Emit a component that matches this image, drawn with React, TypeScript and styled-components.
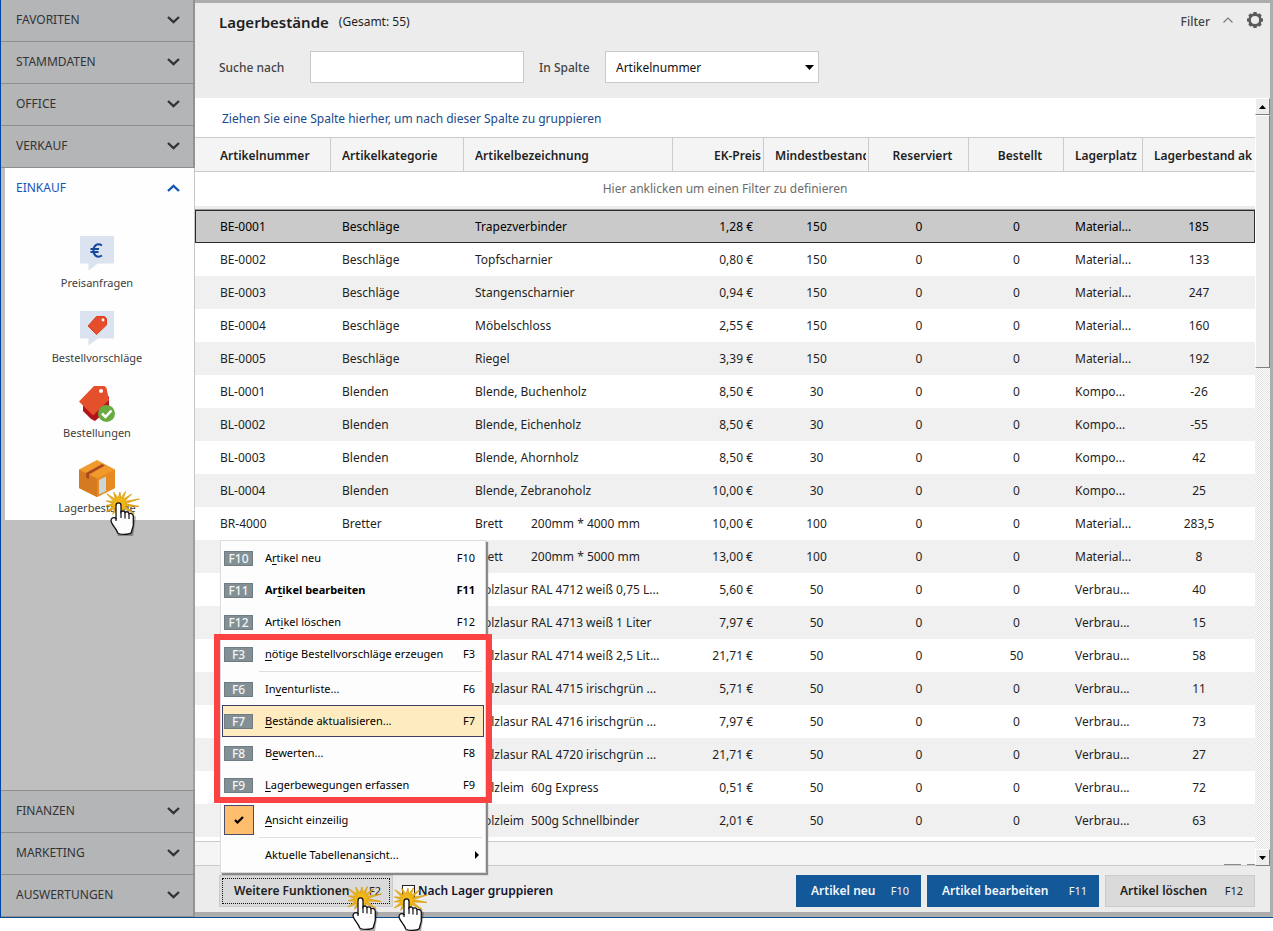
import React from 'react';
import styled, { createGlobalStyle, css } from 'styled-components';

const GlobalStyle = createGlobalStyle`
  *, *::before, *::after { box-sizing: border-box; }
  body { margin: 0; min-height: 100vh; background: #fff; color: #1f1f1f; font: 400 12px/16px "Noto Sans", "Open Sans", sans-serif; }
  button, input, select { font: inherit; color: inherit; margin: 0; }
`;

/* ---------- frame ---------- */

const AppFrame = styled.div`
  display: flex;
  border-left: 1px solid #0046a0;
  border-bottom: 1px solid #0c4a94;
  background: #adadad;
`;

const Sidebar = styled.nav`
  flex: none;
  width: 194px;
  display: flex;
  flex-direction: column;
  background: #bfbfbf;
`;

const SectionButton = styled.button`
  height: 42px;
  display: flex;
  align-items: center;
  justify-content: space-between;
  padding: 0 13px 2px 15px;
  border: 0;
  border-bottom: 1px solid #8e8e8e;
  border-right: 2px solid #939393;
  background: #b3b5b7;
  color: #333;
  text-align: left;
`;

const LowerSections = styled.div`
  display: flex;
  flex-direction: column;
  border-top: 1px solid #8e8e8e;
`;

const SidebarSpace = styled.div`
  flex: 1;
  border-right: 2px solid #a0a0a0;
`;

const OpenSection = styled.section`
  margin-left: 4px;
  background: #fefefe;
  border-right: 1px solid #c6c6c6;
`;

const OpenSectionButton = styled.button`
  width: 100%;
  height: 40px;
  display: flex;
  align-items: center;
  justify-content: space-between;
  padding: 0 14px 0 11px;
  border: 0;
  background: none;
  color: #1555b8;
`;

const NavList = styled.ul`
  list-style: none;
  margin: 0;
  padding: 27px 5px 0 0;
`;

const NavItem = styled.li`
  height: 75px;
  &:last-child { height: 60px; }
`;

const NavLink = styled.a`
  display: flex;
  flex-direction: column;
  align-items: center;
  color: #404040;
  font-size: 11px;
  text-decoration: none;
  svg { display: block; margin-bottom: 3px; }
`;

const NavLabel = styled.span`
  position: relative;
`;

const Main = styled.main`
  flex: 1;
  min-width: 0;
  border: solid #adadad;
  border-width: 3px 3px 5px 0;
  background: #ececec;
`;

/* ---------- top area ---------- */

const TitleBar = styled.header`
  height: 38px;
  display: flex;
  align-items: center;
  padding: 0 7px 0 24px;
`;

const Title = styled.h1`
  margin: 0 10px 0 0;
  font-size: 15px;
  font-weight: 600;
`;

const FilterToggle = styled.button`
  margin-left: auto;
  display: flex;
  align-items: center;
  gap: 13px;
  padding: 0 14px 0 0;
  border: 0;
  background: none;
  color: #444;
  font-weight: 500;
  svg { margin-bottom: 4px; }
`;

const IconButton = styled.button`
  display: flex;
  padding: 0 0 5px;
  border: 0;
  background: none;
`;

const SearchFields = styled.form`
  height: 57px;
  display: grid;
  grid-template-columns: 91px 214px 81px 214px;
  align-items: start;
  padding: 10px 0 0 24px;
`;

const FieldLabel = styled.label<{ $indent?: boolean }>`
  padding-left: ${p => (p.$indent ? 15 : 0)}px;
  line-height: 34px;
  font-weight: 500;
  color: #444;
  white-space: nowrap;
`;

const field = css`
  width: 100%;
  height: 32px;
  border: 1px solid #c9c9c9;
  border-radius: 0;
  background: #fff;
  color: #111;
`;

const TextInput = styled.input`
  ${field}
  padding: 2px 10px 0;
`;

const SelectBox = styled.div`
  position: relative;
  svg { position: absolute; right: 5px; top: 14px; pointer-events: none; }
`;

const Select = styled.select`
  ${field}
  appearance: none;
  padding: 2px 24px 0 10px;
`;

/* ---------- grid ---------- */

const GridArea = styled.div`
  display: flex;
  background: #fff;
`;

const GridBody = styled.div`
  flex: 1;
  min-width: 0;
`;

const GroupHint = styled.div`
  height: 39px;
  padding: 0 27px;
  line-height: 42px;
  color: #204a8c;
`;

const Table = styled.table`
  width: 100%;
  table-layout: fixed;
  border-collapse: separate;
  border-spacing: 0;
  margin-bottom: 4px;
`;

type Align = 'left' | 'right' | 'center';

const HeadCell = styled.th<{ $align: Align; $shift?: boolean }>`
  height: 35px;
  padding: 2px 2px 0 ${p => (p.$shift ? 10 : 11)}px;
  border: solid #cbcbcb;
  border-width: 1px 1px 1px 0;
  background: #f4f4f4;
  font-weight: 600;
  text-align: ${p => p.$align};
  white-space: nowrap;
  &:first-child { padding-left: 25px; }
  &:last-child { border-right: 0; }
`;

const HeadLabel = styled.span`
  display: block;
  overflow: hidden;
`;

const FilterCell = styled.td`
  height: 38px;
  padding: 0 0 4px;
  border-bottom: 1px solid #9c9c9c;
  box-shadow: inset 0 -3px #ededed;
  color: #6c6c6c;
  text-align: center;
`;

const Row = styled.tr<{ $selected?: boolean }>`
  &:nth-child(odd) { background: #f0f0f0; }
  ${p => p.$selected && css`
    && { background: #cacaca; color: #000; }
    td { border: solid #2b2b2b; border-width: 1px 0; }
    td:first-child { border-left-width: 1px; padding-left: 24px; }
    td:last-child { border-right-width: 1px; }
  `}
`;

const Cell = styled.td<{ $align: Align }>`
  height: 33px;
  padding: ${p => (p.$align === 'left' ? '0 0 0 11px' : p.$align === 'right' ? '0 11px 0 0' : '0')};
  text-align: ${p => p.$align};
  white-space: nowrap;
  overflow: hidden;
  &:first-child { padding-left: 25px; }
`;

const NamePart = styled.span`
  display: inline-block;
  width: 56px;
`;

const StatusBar = styled.div`
  height: 25px;
  display: flex;
  align-items: flex-end;
  justify-content: flex-end;
  gap: 6px;
  border: solid #cbcbcb;
  border-width: 1px 0;
  background: #f5f5f5;
`;

const ScrollRemnant = styled.span<{ $w: number }>`
  width: ${p => p.$w}px;
  height: 1px;
  background: #8a8a8a;
`;

const ScrollBar = styled.div`
  flex: none;
  width: 15px;
  display: flex;
  flex-direction: column;
  background: repeating-conic-gradient(#e2e2e2 0 25%, #fff 0 50%) 0 0 / 2px 2px;
`;

const ScrollPart = styled.div<{ $thumb?: boolean }>`
  height: ${p => (p.$thumb ? 253 : 17)}px;
  display: flex;
  align-items: center;
  justify-content: center;
  border: 1px solid;
  border-color: #fff #808080 #808080 #fff;
  background: #ededed;
`;

const ScrollSpace = styled.div`
  flex: 1;
`;

/* ---------- footer ---------- */

const Footer = styled.footer`
  height: 46px;
  display: flex;
  align-items: center;
  gap: 6px;
  padding: 4px 15px 0 24px;
`;

const ActionButton = styled.button<{ $primary?: boolean; $width: number }>`
  width: ${p => p.$width}px;
  height: 32px;
  display: flex;
  align-items: center;
  justify-content: space-between;
  padding: 0 11px 0 14px;
  border: 1px solid ${p => (p.$primary ? '#135899' : '#cbcbcb')};
  background: ${p => (p.$primary ? '#135899' : '#dadada')};
  color: ${p => (p.$primary ? '#f2f6fa' : '#222')};
  font-weight: 600;
  white-space: nowrap;
`;

const Hotkey = styled.span`
  font-size: 11px;
  font-weight: 400;
`;

const FunctionsBox = styled.div`
  position: relative;
`;

const FunctionsButton = styled(ActionButton)`
  outline: 1px dotted #111;
  outline-offset: -4px;
`;

const GroupCheck = styled.label`
  position: relative;
  display: flex;
  align-items: center;
  gap: 3px;
  margin: 0 auto 0 3px;
  font-weight: 600;
  color: #14142e;
`;

const CheckBox = styled.input`
  appearance: none;
  width: 13px;
  height: 13px;
  border: 1px solid #222;
  background: #fff;
`;

/* ---------- context menu ---------- */

const Menu = styled.div`
  position: absolute;
  left: 1px;
  bottom: calc(100% + 2px);
  width: 266px;
  padding: 1px;
  border: 1px solid #dcdcdc;
  background: #fdfdfd;
  box-shadow: 2px 2px 1px #8a8a8a;
  color: #000;
  font-size: 11px;
`;

const MenuItem = styled.button<{ $bold?: boolean; $active?: boolean; $submenu?: boolean }>`
  width: 100%;
  height: 32px;
  display: grid;
  grid-template-columns: 41px 1fr auto;
  align-items: center;
  padding: 0 ${p => (p.$submenu ? 4 : 8)}px 0 1px;
  border: 1px solid ${p => (p.$active ? '#3f3f66' : 'transparent')};
  background: ${p => (p.$active ? '#ffebc0' : 'none')};
  text-align: left;
  font-weight: ${p => (p.$bold ? 700 : 400)};
  u { text-underline-offset: 2px; }
`;

const KeyBadge = styled.span`
  width: 29px;
  height: 15px;
  border: 1px solid #6f7d83;
  background: #829096;
  color: #f4f4f4;
  font-size: 12px;
  font-weight: 500;
  line-height: 13px;
  text-align: center;
`;

const CheckTile = styled.span`
  width: 30px;
  height: 30px;
  display: flex;
  align-items: center;
  justify-content: center;
  border: 1px solid #4b4b6a;
  background: #ffbd6e;
`;

const MenuRule = styled.hr`
  height: 1px;
  margin: 1px 2px 1px 37px;
  border: 0;
  background: #dedede;
`;

const MarkedGroup = styled.div`
  position: relative;
  &::after {
    content: '';
    position: absolute;
    inset: -4px -8px -2px;
    border: 6px solid #fb4343;
    pointer-events: none;
  }
`;

/* ---------- drawings ---------- */

const Chevron = ({ up }: { up?: boolean }) => (
  <svg width="13" height="8" viewBox="0 0 13 8" fill="none" stroke="currentColor" strokeWidth="2.3">
    <path d={up ? 'M1 7 6.500 1.800 12 7' : 'M1 1 6.500 6.200 12 1'} />
  </svg>
);

const ThinChevron = () => (
  <svg width="10" height="6" viewBox="0 0 10 6" fill="none" stroke="#777" strokeWidth="1.1">
    <path d="M.5 5.500 5 1 9.500 5.500" />
  </svg>
);

const Triangle = ({ up }: { up?: boolean }) => (
  <svg width="7" height="4" viewBox="0 0 7 4">
    <path d={up ? 'M0 4 3.500 0 7 4Z' : 'M0 0H7L3.500 4Z'} fill="#000" />
  </svg>
);

const GearIcon = () => (
  <svg width="16" height="16" viewBox="0 0 16 16">
    <circle cx="8" cy="8" r="5.400" fill="none" stroke="#5c5c5c" strokeWidth="2.600" />
    {[0, 45, 90, 135, 180, 225, 270, 315].map(a => (
      <path key={a} d="M5.900 2.600 6.500 0H9.500L10.100 2.600Z" fill="#5c5c5c" transform={`rotate(${a} 8 8)`} />
    ))}
  </svg>
);

const Bubble = () => <path d="M2 1H36V28.500H20L10.500 35.500V28.500H2Z" fill="#dbe3f0" />;

const InquiryIcon = () => (
  <svg width="38" height="37" viewBox="0 0 38 37">
    <Bubble />
    <path d="M24 10.500C19 7.500 15.500 11 15.500 15.500S19 23.500 24 20.500M12.500 13.900H21M12.500 17.100H20.500" fill="none" stroke="#17479a" strokeWidth="2" />
  </svg>
);

const SuggestionIcon = () => (
  <svg width="38" height="37" viewBox="0 0 38 37">
    <Bubble />
    <path d="M18.500 6.500H26.500L28.500 8.500V15L18.500 24.500 10 16Z" fill="#e64e2b" stroke="#d8401d" />
    <circle cx="25" cy="10" r="1.400" fill="#fff" />
  </svg>
);

const OrdersIcon = () => (
  <svg width="38" height="37" viewBox="0 0 38 37">
    <path d="M5 16 28 9 31 12V24L17 36 13 34 5 26Z" fill="#b0151b" />
    <path d="M16 1H26.500L28.500 3 31 15 15 30.500 1 16.500Z" fill="#e5502c" />
    <circle cx="23" cy="6" r="2" fill="#fff" />
    <circle cx="28.500" cy="28.500" r="8.500" fill="#69ab42" />
    <path d="M24 28.500 27.500 32 33.500 25.500" fill="none" stroke="#fff" strokeWidth="2.500" />
  </svg>
);

const StockIcon = () => (
  <svg width="38" height="37" viewBox="0 0 38 37">
    <path d="M19 0 37 9.500V28L19 37 1 28V9.500Z" fill="#f19a2c" />
    <path d="M1 9.500 19 18.500V37L1 28Z" fill="#d57a20" />
    <path d="M37 9.500 19 18.500V37L37 28Z" fill="#e68a24" />
    <path d="M8 13 24 4 27 5.500 11 14.500V19L8 17.500Z" fill="#ab4a20" />
    <path d="M21 20 28 16.500V31L21 34.500Z" fill="#c9d6da" />
  </svg>
);

/* [angle in degrees, length] of every ray, clockwise from the top */
const rays = [
  [5, 12], [28, 14], [52, 16], [76, 21], [97, 20], [122, 18], [150, 10], [180, 9],
  [212, 12], [238, 15], [262, 13], [284, 13], [310, 16], [336, 13],
];
const at = (deg: number, r: number) => {
  const a = ((deg - 90) * Math.PI) / 180;
  return `${(14 + r * Math.cos(a)).toFixed(1)},${(13 + r * Math.sin(a)).toFixed(1)}`;
};
const burst = rays
  .flatMap(([deg, r], i) => {
    const next = i + 1 < rays.length ? rays[i + 1][0] : rays[0][0] + 360;
    return [at(deg, r), at((deg + next) / 2, 6)];
  })
  .join(' ');

const ClickMark = styled.svg.attrs({ width: 38, height: 46, viewBox: '0 0 38 46' })<{ $left: number; $top: number }>`
  position: absolute;
  left: ${p => p.$left}px;
  top: ${p => p.$top}px;
  z-index: 2;
  pointer-events: none;
`;

const ClickHand = ({ left, top }: { left: number; top: number }) => (
  <ClickMark $left={left} $top={top} aria-hidden>
    <polygon points={burst} fill="#f0b716" stroke="#d79c10" strokeWidth=".8" />
    <path d="M7 30 13 45H28L31 26 28 23Z" fill="#000" opacity=".3" />
    <path
      d="M11 14.500C11 11 16 11 16 14.500V21C17 19.500 19.500 19.800 20 21.500 21.200 20.300 23.600 20.800 24 22.700 25.400 22 28.300 22.500 28.300 25.500V34C28 37 26.500 39 26.500 41.500 24 44 14 44 12.500 41.500 12 38.500 6 33 6 29.500 6 26.500 9 26 11 27.500Z"
      fill="#fdfdfd" stroke="#111" strokeWidth="1.300"
    />
    <path d="M16 20V27M20 21.500V27.500M24 22.700V28M11 27V30" stroke="#111" strokeWidth="1.200" />
  </ClickMark>
);

/* ---------- data ---------- */

const columns: { label: string; width: number; head: Align; cell: Align; shift?: boolean }[] = [
  { label: 'Artikelnummer', width: 136, head: 'left', cell: 'left' },
  { label: 'Artikelkategorie', width: 133, head: 'left', cell: 'left' },
  { label: 'Artikelbezeichnung', width: 209, head: 'left', cell: 'left' },
  { label: 'EK-Preis', width: 91, head: 'right', cell: 'right' },
  { label: 'Mindestbestand', width: 105, head: 'left', cell: 'center' },
  { label: 'Reserviert', width: 100, head: 'center', cell: 'center', shift: true },
  { label: 'Bestellt', width: 95, head: 'center', cell: 'center', shift: true },
  { label: 'Lagerplatz', width: 79, head: 'left', cell: 'left' },
  { label: 'Lagerbestand ak', width: 112, head: 'left', cell: 'center' },
];

const rows = [
  'BE-0001|Beschläge|Trapezverbinder|1,28 €|150|0|0|Material...|185',
  'BE-0002|Beschläge|Topfscharnier|0,80 €|150|0|0|Material...|133',
  'BE-0003|Beschläge|Stangenscharnier|0,94 €|150|0|0|Material...|247',
  'BE-0004|Beschläge|Möbelschloss|2,55 €|150|0|0|Material...|160',
  'BE-0005|Beschläge|Riegel|3,39 €|150|0|0|Material...|192',
  'BL-0001|Blenden|Blende, Buchenholz|8,50 €|30|0|0|Kompo...|-26',
  'BL-0002|Blenden|Blende, Eichenholz|8,50 €|30|0|0|Kompo...|-55',
  'BL-0003|Blenden|Blende, Ahornholz|8,50 €|30|0|0|Kompo...|42',
  'BL-0004|Blenden|Blende, Zebranoholz|10,00 €|30|0|0|Kompo...|25',
  'BR-4000|Bretter|Brett~200mm * 4000 mm|10,00 €|100|0|0|Material...|283,5',
  '||Brett~200mm * 5000 mm|13,00 €|100|0|0|Material...|8',
  '||Holzlasur~RAL 4712 weiß 0,75 L...|5,60 €|50|0|0|Verbrau...|40',
  '||Holzlasur~RAL 4713 weiß 1 Liter|7,97 €|50|0|0|Verbrau...|15',
  '||Holzlasur~RAL 4714 weiß 2,5 Lit...|21,71 €|50|0|50|Verbrau...|58',
  '||Holzlasur~RAL 4715 irischgrün ...|5,71 €|50|0|0|Verbrau...|11',
  '||Holzlasur~RAL 4716 irischgrün ...|7,97 €|50|0|0|Verbrau...|73',
  '||Holzlasur~RAL 4720 irischgrün ...|21,71 €|50|0|0|Verbrau...|27',
  '||Holzleim~60g Express|0,51 €|50|0|0|Verbrau...|72',
  '||Holzleim~500g Schnellbinder|2,01 €|50|0|0|Verbrau...|63',
].map(r => r.split('|'));

const CellText = ({ text }: { text: string }) => {
  const [name, detail] = text.split('~');
  return detail ? <><NamePart>{name}</NamePart>{detail}</> : <>{text}</>;
};

type EntryProps = { hotkey: string; before?: string; mark: string; after: string; bold?: boolean; active?: boolean };

const MenuEntry = ({ hotkey, before, mark, after, bold, active }: EntryProps) => (
  <MenuItem type="button" role="menuitem" $bold={bold} $active={active}>
    <KeyBadge>{hotkey}</KeyBadge>
    <span>{before}<u>{mark}</u>{after}</span>
    <span>{hotkey}</span>
  </MenuItem>
);

const FunctionsMenu = () => (
  <Menu role="menu">
    <MenuEntry hotkey="F10" before="A" mark="r" after="tikel neu" />
    <MenuEntry hotkey="F11" before="Ar" mark="t" after="ikel bearbeiten" bold />
    <MenuEntry hotkey="F12" before="Art" mark="i" after="kel löschen" />
    <MarkedGroup>
      <MenuEntry hotkey="F3" mark="n" after="ötige Bestellvorschläge erzeugen" />
      <MenuRule />
      <MenuEntry hotkey="F6" before="In" mark="v" after="enturliste..." />
      <MenuEntry hotkey="F7" mark="B" after="estände aktualisieren..." active />
      <MenuEntry hotkey="F8" before="B" mark="e" after="werten..." />
      <MenuEntry hotkey="F9" mark="L" after="agerbewegungen erfassen" />
    </MarkedGroup>
    <MenuRule />
    <MenuItem type="button" role="menuitemcheckbox" aria-checked>
      <CheckTile>
        <svg width="10" height="8" viewBox="0 0 10 8" fill="none" stroke="#000" strokeWidth="2.200">
          <path d="M1 4 3.500 6.500 9 1" />
        </svg>
      </CheckTile>
      <span><u>A</u>nsicht einzeilig</span>
    </MenuItem>
    <MenuRule />
    <MenuItem type="button" role="menuitem" $submenu>
      <span />
      <span>Aktuelle Tabellenan<u>s</u>icht...</span>
      <svg width="8" height="8" viewBox="0 0 8 8"><path d="M4 0 8 4 4 8Z" /></svg>
    </MenuItem>
  </Menu>
);

export default function App() {
  return (
    <>
      <GlobalStyle />
      <AppFrame>
        <Sidebar>
          {['FAVORITEN', 'STAMMDATEN', 'OFFICE', 'VERKAUF'].map(s => (
            <SectionButton key={s} type="button">{s}<Chevron /></SectionButton>
          ))}
          <OpenSection>
            <OpenSectionButton type="button">EINKAUF<Chevron up /></OpenSectionButton>
            <NavList>
              <NavItem><NavLink href="#preisanfragen"><InquiryIcon />Preisanfragen</NavLink></NavItem>
              <NavItem><NavLink href="#bestellvorschlaege"><SuggestionIcon />Bestellvorschläge</NavLink></NavItem>
              <NavItem><NavLink href="#bestellungen"><OrdersIcon />Bestellungen</NavLink></NavItem>
              <NavItem>
                <NavLink href="#lagerbestaende">
                  <StockIcon />
                  <NavLabel>Lagerbestände<ClickHand left={47} top={-9} /></NavLabel>
                </NavLink>
              </NavItem>
            </NavList>
          </OpenSection>
          <SidebarSpace />
          <LowerSections>
            {['FINANZEN', 'MARKETING', 'AUSWERTUNGEN'].map(s => (
              <SectionButton key={s} type="button">{s}<Chevron /></SectionButton>
            ))}
          </LowerSections>
        </Sidebar>

        <Main>
          <TitleBar>
            <Title>Lagerbestände</Title>
            <span>(Gesamt: 55)</span>
            <FilterToggle type="button">Filter<ThinChevron /></FilterToggle>
            <IconButton type="button" aria-label="Einstellungen"><GearIcon /></IconButton>
          </TitleBar>
          <SearchFields>
            <FieldLabel htmlFor="search">Suche nach</FieldLabel>
            <TextInput id="search" />
            <FieldLabel htmlFor="column" $indent>In Spalte</FieldLabel>
            <SelectBox>
              <Select id="column" defaultValue="Artikelnummer"><option>Artikelnummer</option></Select>
              <svg width="9" height="5" viewBox="0 0 9 5"><path d="M0 0H9L4.500 5Z" /></svg>
            </SelectBox>
          </SearchFields>

          <GridArea>
            <GridBody>
              <GroupHint>Ziehen Sie eine Spalte hierher, um nach dieser Spalte zu gruppieren</GroupHint>
              <Table>
                <colgroup>{columns.map(c => <col key={c.label} width={c.width} />)}</colgroup>
                <thead>
                  <tr>
                    {columns.map(c => (
                      <HeadCell key={c.label} $align={c.head} $shift={c.shift}><HeadLabel>{c.label}</HeadLabel></HeadCell>
                    ))}
                  </tr>
                  <tr><FilterCell colSpan={9}>Hier anklicken um einen Filter zu definieren</FilterCell></tr>
                </thead>
                <tbody>
                  {rows.map((r, i) => (
                    <Row key={i} $selected={i === 0}>
                      {r.map((text, j) => (
                        <Cell key={j} $align={columns[j].cell}><CellText text={text} /></Cell>
                      ))}
                    </Row>
                  ))}
                </tbody>
              </Table>
              <StatusBar><ScrollRemnant $w={17} /><ScrollRemnant $w={8} /></StatusBar>
            </GridBody>
            <ScrollBar aria-hidden>
              <ScrollPart><Triangle up /></ScrollPart>
              <ScrollPart $thumb />
              <ScrollSpace />
              <ScrollPart><Triangle /></ScrollPart>
            </ScrollBar>
          </GridArea>

          <Footer>
            <FunctionsBox>
              <FunctionsButton type="button" $width={174}>Weitere Funktionen<Hotkey>F2</Hotkey></FunctionsButton>
              <FunctionsMenu />
              <ClickHand left={128} top={11} />
            </FunctionsBox>
            <GroupCheck>
              <CheckBox type="checkbox" />
              Nach Lager gruppieren
              <ClickHand left={-9} top={4} />
            </GroupCheck>
            <ActionButton type="button" $primary $width={125}>Artikel neu<Hotkey>F10</Hotkey></ActionButton>
            <ActionButton type="button" $primary $width={172}>Artikel bearbeiten<Hotkey>F11</Hotkey></ActionButton>
            <ActionButton type="button" $width={150}>Artikel löschen<Hotkey>F12</Hotkey></ActionButton>
          </Footer>
        </Main>
      </AppFrame>
    </>
  );
}
